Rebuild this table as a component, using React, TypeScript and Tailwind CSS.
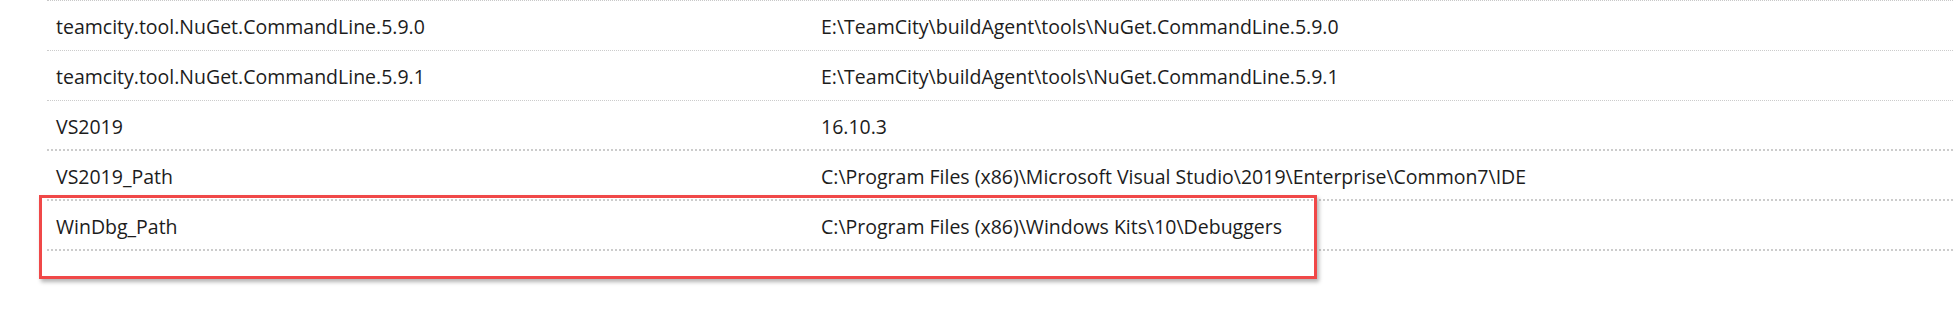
import React from 'react';

const rows = [
  { name: 'teamcity.tool.NuGet.CommandLine.5.9.0', value: 'E:\\TeamCity\\buildAgent\\tools\\NuGet.CommandLine.5.9.0', thick: false },
  { name: 'teamcity.tool.NuGet.CommandLine.5.9.1', value: 'E:\\TeamCity\\buildAgent\\tools\\NuGet.CommandLine.5.9.1', thick: false },
  { name: 'VS2019', value: '16.10.3', thick: true },
  { name: 'VS2019_Path', value: 'C:\\Program Files (x86)\\Microsoft Visual Studio\\2019\\Enterprise\\Common7\\IDE', thick: true },
  { name: 'WinDbg_Path', value: 'C:\\Program Files (x86)\\Windows Kits\\10\\Debuggers', thick: true },
];

export default function App() {
  return (
    <div className="relative w-[1953px] h-[336px] bg-white overflow-hidden text-[#1c1c1c] font-['Open_Sans',sans-serif]">
      {/* Parameter table */}
      <div className="ml-[47px] border-t border-dotted border-[#c8c8c8]">
        {rows.map((r) => (
          <div
            key={r.name}
            className={`flex h-[50px] items-center pt-[3px] border-dotted border-[#cccccc] ${
              r.thick ? 'border-b-2' : 'border-b'
            }`}
          >
            <div className="w-[765px] pl-[9px] text-[19.5px]">{r.name}</div>
            <div className="flex-1 pl-[9px] text-[19.5px]">{r.value}</div>
          </div>
        ))}
      </div>

      {/* Highlight annotation */}
      <div className="absolute left-[39px] top-[195px] w-[1278px] h-[84px] border-[3px] border-[#f04848] shadow-[2px_3px_4px_rgba(0,0,0,0.3)]" />
    </div>
  );
}
